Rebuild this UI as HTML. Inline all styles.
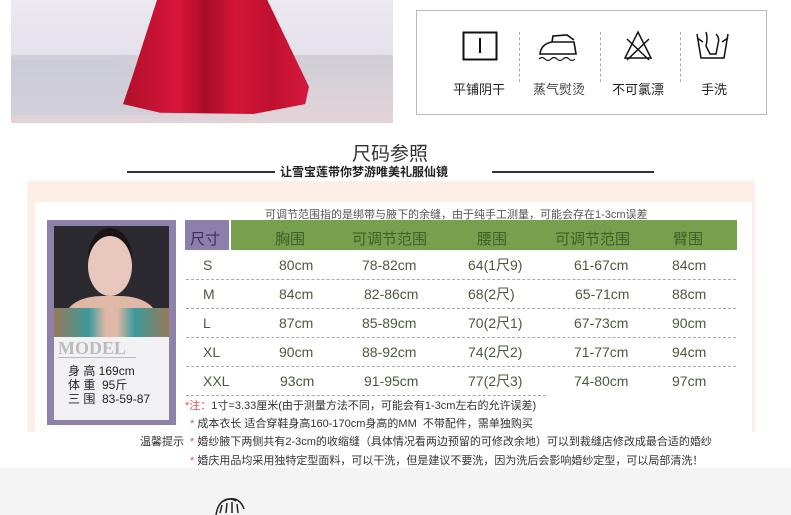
<!DOCTYPE html>
<html><head><meta charset="utf-8">
<style>
*{margin:0;padding:0;box-sizing:border-box}
body{width:791px;height:515px;background:#fff;position:relative;overflow:hidden;font-family:"Liberation Sans","Noto Sans CJK SC",sans-serif;color:#333}
.a{position:absolute}
.t{position:absolute;white-space:nowrap}
.photo{left:11px;top:0;width:382px;height:123px;background:linear-gradient(#ece8f0 0,#e6e2ec 54px,#cfcdd6 56px,#d9d2d8 90px,#e2d3d8 123px);overflow:hidden}
.care{left:416px;top:10px;width:351px;height:105px;border:1px solid #bbb}
.sep{border-left:1px dashed #aaa;width:0;height:50px;top:32px}
.lbl{font-size:13px;color:#222;top:79px}
.row{font-family:"Liberation Sans","Noto Sans CJK SC",sans-serif;font-size:14px;line-height:16px;color:#4b5a3c}
.dash{left:186px;width:550px;border-top:1px dashed #aaa;height:0}
.hd{font-size:15px;color:#3f5e2a;top:228px}
.note{font-size:11px;color:#333;left:185px}
.note b{color:#e05060;font-weight:normal}
</style></head><body>
<div class="a photo">
  <div class="a" style="left:0;top:60px;width:150px;height:55px;background:#c8ccd8;opacity:.6;border-radius:0 60px 0 0"></div>
  <div class="a" style="left:112px;top:-10px;width:186px;height:124px;background:linear-gradient(90deg,#b0102a,#d8153a 30%,#a80c26 45%,#d41538 60%,#c01030 80%,#d41a3c);clip-path:polygon(20% 0,75% 0,100% 78%,98% 92%,70% 100%,20% 99%,0 92%,5% 70%)"></div>
</div>
<div class="a care"></div>
<svg class="a" style="left:0;top:0" width="791" height="120">
  <rect x="463.5" y="32.5" width="33" height="27" fill="none" stroke="#111" stroke-width="2"/>
  <line x1="480" y1="38" x2="480" y2="53" stroke="#111" stroke-width="2"/>
  <path d="M540 54 Q541 44 552 42 L574 42 L576 54 Z M552 42 L553 36 L567 35 L574 40" fill="none" stroke="#111" stroke-width="1.6"/>
  <path d="M539 59 q3 -3 6 0 t6 0 t6 0 t6 0 t6 0 t6 0" fill="none" stroke="#111" stroke-width="1.2"/>
  <path d="M638 32 L625 58 L651 58 Z M627 39 L649 60 M649 39 L627 60" fill="none" stroke="#111" stroke-width="1.5"/>
  <path d="M697 34 L701 58 L724 58 L728 34 M697 38 L703 42 M728 38 L722 42 M706 32 Q708 38 706 46 L710 54 L716 54 L718 44 Q720 38 716 34" fill="none" stroke="#111" stroke-width="1.5"/>
</svg>
<div class="a sep" style="left:519px"></div>
<div class="a sep" style="left:600px"></div>
<div class="a sep" style="left:680px"></div>
<div class="t lbl" style="left:453px">平铺阴干</div>
<div class="t lbl" style="left:533px;color:#444">蒸气熨烫</div>
<div class="t lbl" style="left:612px">不可氯漂</div>
<div class="t lbl" style="left:701px">手洗</div>

<div class="t" style="left:352px;top:139px;font-size:19px;color:#333">尺码参照</div>
<div class="a" style="left:127px;top:171px;width:148px;height:2px;background:#333"></div>
<div class="a" style="left:492px;top:171px;width:162px;height:2px;background:#333"></div>
<div class="t" style="left:280px;top:163px;font-size:12px;color:#222;font-weight:bold">让雪宝莲带你梦游唯美礼服仙镜</div>

<div class="a" style="left:27px;top:181px;width:728px;height:251px;background:#fdeee6"></div>
<div class="a" style="left:35px;top:202px;width:717px;height:230px;background:#fff"></div>
<div class="a" style="left:0;top:468px;width:791px;height:47px;background:#f4f4f4"></div>
<div class="a" style="left:22px;top:432px;width:730px;height:36px;background:#fff"></div>

<div class="a" style="left:47px;top:220px;width:129px;height:205px;background:#8f82a8"></div>
<div class="a" style="left:54px;top:226px;width:115px;height:194px;background:#f1f0f3"></div>
<div class="a" style="left:54px;top:226px;width:115px;height:111px;background:#2b2a30;overflow:hidden">
  <div class="a" style="left:34px;top:10px;width:44px;height:60px;border-radius:50%;background:#e8c8bc;box-shadow:0 -8px 0 #1a1416"></div>
  <div class="a" style="left:12px;top:70px;width:90px;height:50px;border-radius:40% 40% 0 0;background:#e0b8a8"></div>
  <div class="a" style="left:0;top:82px;width:115px;height:30px;background:linear-gradient(90deg,#9a7a5a,#3a9a9a 30%,#e0b8a8 45%,#e0b8a8 55%,#3a9a9a 70%,#9a7a5a)"></div>
</div>
<div class="t" style="left:58px;top:338px;font-family:'Liberation Serif',serif;font-size:18px;font-weight:bold;color:#bbb">MODEL</div>
<div class="a" style="left:58px;top:357px;width:78px;height:1px;background:#bbb"></div>
<div class="t" style="left:68px;top:364px;font-size:12px;color:#222;line-height:14px">身 高 169cm<br>体 重&nbsp; 95斤<br>三 围&nbsp; 83-59-87</div>

<div class="t" style="left:265px;top:206px;font-size:11px;color:#555">可调节范围指的是绑带与腋下的余缝，由于纯手工测量，可能会存在1-3cm误差</div>
<div class="a" style="left:185px;top:220px;width:44px;height:30px;background:#8c7fab"></div>
<div class="a" style="left:231px;top:220px;width:506px;height:30px;background:#77a04e"></div>
<div class="t hd" style="left:190px;color:#3e2e60">尺寸</div>
<div class="t hd" style="left:275px">胸围</div>
<div class="t hd" style="left:352px">可调节范围</div>
<div class="t hd" style="left:477px">腰围</div>
<div class="t hd" style="left:555px">可调节范围</div>
<div class="t hd" style="left:673px">臂围</div>

<div class="a dash" style="top:279px"></div>
<div class="a dash" style="top:308px"></div>
<div class="a dash" style="top:337px"></div>
<div class="a dash" style="top:366px"></div>
<div class="a dash" style="top:395px;width:360px"></div>

<div class="t row" style="left:203px;top:257px">S</div><div class="t row" style="left:279px;top:257px">80cm</div><div class="t row" style="left:362px;top:257px">78-82cm</div><div class="t row" style="left:468px;top:257px">64(1尺9)</div><div class="t row" style="left:574px;top:257px">61-67cm</div><div class="t row" style="left:672px;top:257px">84cm</div>
<div class="t row" style="left:203px;top:286px">M</div><div class="t row" style="left:279px;top:286px">84cm</div><div class="t row" style="left:364px;top:286px">82-86cm</div><div class="t row" style="left:468px;top:286px">68(2尺)</div><div class="t row" style="left:575px;top:286px">65-71cm</div><div class="t row" style="left:672px;top:286px">88cm</div>
<div class="t row" style="left:203px;top:315px">L</div><div class="t row" style="left:279px;top:315px">87cm</div><div class="t row" style="left:362px;top:315px">85-89cm</div><div class="t row" style="left:468px;top:315px">70(2尺1)</div><div class="t row" style="left:574px;top:315px">67-73cm</div><div class="t row" style="left:672px;top:315px">90cm</div>
<div class="t row" style="left:203px;top:344px">XL</div><div class="t row" style="left:279px;top:344px">90cm</div><div class="t row" style="left:362px;top:344px">88-92cm</div><div class="t row" style="left:468px;top:344px">74(2尺2)</div><div class="t row" style="left:574px;top:344px">71-77cm</div><div class="t row" style="left:672px;top:344px">94cm</div>
<div class="t row" style="left:203px;top:373px">XXL</div><div class="t row" style="left:280px;top:373px">93cm</div><div class="t row" style="left:364px;top:373px">91-95cm</div><div class="t row" style="left:468px;top:373px">77(2尺3)</div><div class="t row" style="left:574px;top:373px">74-80cm</div><div class="t row" style="left:672px;top:373px">97cm</div>

<div class="t note" style="top:397px;left:185px"><b>*注：</b>1寸=3.33厘米(由于测量方法不同，可能会有1-3cm左右的允许误差)</div>
<div class="t note" style="top:415px;left:190px"><b>*</b> 成本衣长 适合穿鞋身高160-170cm身高的MM&nbsp; 不带配件，需单独购买</div>
<div class="t" style="left:140px;top:433px;font-size:11px;color:#333">温馨提示</div>
<div class="t note" style="top:433px;left:190px"><b>*</b> 婚纱腋下两侧共有2-3cm的收缩缝（具体情况看两边预留的可修改余地）可以到裁缝店修改成最合适的婚纱</div>
<div class="t note" style="top:452px;left:190px"><b>*</b> 婚庆用品均采用独特定型面料，可以干洗，但是建议不要洗，因为洗后会影响婚纱定型，可以局部清洗！</div>

<svg class="a" style="left:210px;top:495px" width="40" height="20"><path d="M6 20 Q8 6 18 4 Q30 2 34 14 M10 18 L12 10 M16 18 L17 8 M22 18 L22 7 M28 18 L27 9 M14 6 q6 -4 12 0" fill="none" stroke="#222" stroke-width="1.5"/></svg>
</body></html>
